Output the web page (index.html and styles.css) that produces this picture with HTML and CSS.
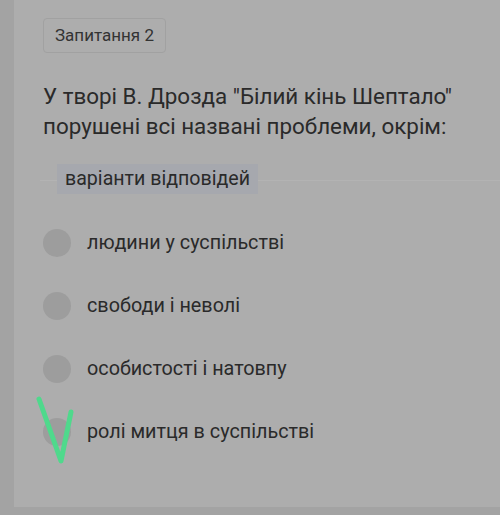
FILE: index.html
```html
<!DOCTYPE html>
<html lang="uk">
<head>
    <meta charset="UTF-8">
    <meta name="viewport" content="width=device-width, initial-scale=1.0">
    <title>Запитання 2</title>
    <link rel="stylesheet" href="styles.css">
</head>
<body>
    <div class="card">
        <div class="badge">Запитання 2</div>
        <p class="question">У творі В. Дрозда "Білий кінь Шептало" порушені всі названі проблеми, окрім:</p>
        <div class="divider">
            <span class="chip">варіанти відповідей</span>
        </div>
        <ul class="options">
            <li class="option"><span class="radio"></span>людини у суспільстві</li>
            <li class="option"><span class="radio"></span>свободи і неволі</li>
            <li class="option"><span class="radio"></span>особистості і натовпу</li>
            <li class="option">
                <span class="radio">
                    <svg class="tick" width="44" height="74" viewBox="0 0 44 74">
                        <path d="M3 6 L25 68 L35 19" fill="none" stroke="#4fd98c" stroke-width="5" stroke-linecap="round" stroke-linejoin="round"/>
                    </svg>
                </span>ролі митця в суспільстві
            </li>
        </ul>
    </div>
</body>
</html>
```

FILE: styles.css
```css
body {
    margin: 0;
    padding: 0;
    background-color: #a3a3a3;
    font-family: Roboto, "Noto Sans", Arial, sans-serif;
    color: #2a2a2a;
}
.card {
    margin-left: 14px;
    height: 507px;
    background-color: #adadad;
    padding: 18px 0 0 29px;
    box-sizing: border-box;
}
.badge {
    display: inline-block;
    font-size: 17px;
    line-height: 21px;
    padding: 6px 11px;
    border: 1px solid #a1a1a1;
    border-radius: 4px;
    color: #333;
}
.question {
    font-size: 22.4px;
    line-height: 30px;
    margin: 28px 20px 0 0;
}
.divider {
    position: relative;
    margin: 23px 0 0 -3px;
    height: 30px;
}
.divider::before {
    content: "";
    position: absolute;
    left: 0;
    right: 0;
    top: 16px;
    border-top: 1px solid #b3b3b3;
}
.chip {
    position: relative;
    display: inline-block;
    margin-left: 17px;
    padding: 0 8px;
    height: 30px;
    line-height: 30px;
    font-size: 19.6px;
    background-color: #a6a8ae;
    color: #2a2a2a;
}
.options {
    list-style: none;
    margin: 34px 0 0 0;
    padding: 0;
}
.option {
    display: flex;
    align-items: center;
    height: 29px;
    margin-bottom: 34px;
    font-size: 19.8px;
}
.radio {
    position: relative;
    flex: none;
    width: 28px;
    height: 28px;
    border-radius: 50%;
    background-color: #9d9d9d;
    margin-right: 16px;
}
.tick {
    position: absolute;
    left: -7px;
    top: -25px;
}
```
